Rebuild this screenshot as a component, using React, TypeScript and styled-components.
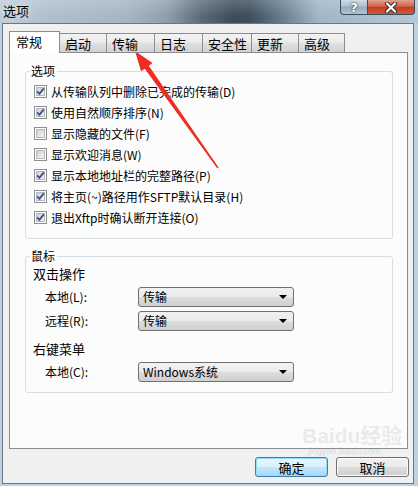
import styled, { createGlobalStyle } from "styled-components";

const TABS = [
  { label: "常规", width: 51 },
  { label: "启动", width: 47 },
  { label: "传输", width: 48 },
  { label: "日志", width: 48 },
  { label: "安全性", width: 49 },
  { label: "更新", width: 47 },
  { label: "高级", width: 46 },
];

const OPTIONS = [
  { label: "从传输队列中删除已完成的传输(D)", checked: true },
  { label: "使用自然顺序排序(N)", checked: true },
  { label: "显示隐藏的文件(F)", checked: false },
  { label: "显示欢迎消息(W)", checked: false },
  { label: "显示本地地址栏的完整路径(P)", checked: true },
  { label: "将主页(~)路径用作SFTP默认目录(H)", checked: true },
  { label: "退出Xftp时确认断开连接(O)", checked: true },
];

function CheckIcon({ checked }: { checked: boolean }) {
  return (
    <svg width="13" height="13" viewBox="0 0 13 13">
      <defs>
        <linearGradient id="cbfill" x1="0" y1="0" x2="1" y2="1">
          <stop offset="0" stopColor="#cbcfd5" />
          <stop offset="1" stopColor="#f7f7f7" />
        </linearGradient>
      </defs>
      <rect x="0.5" y="0.5" width="12" height="12" fill="#fff" stroke="#8e8f8f" />
      <rect x="2.5" y="2.5" width="8" height="8" fill="url(#cbfill)" stroke="#b4b8bd" />
      {checked && (
        <path d="M3.2 6.4 L5.4 8.8 L9.8 3.4" fill="none" stroke="#3d5394" strokeWidth="1.9" />
      )}
    </svg>
  );
}

function CaptionX() {
  return (
    <svg width="14" height="11" viewBox="0 0 14 11">
      <path d="M3 1.5 L11 9.5 M11 1.5 L3 9.5" stroke="#3a2a28" strokeWidth="4.2" strokeLinecap="round" />
      <path d="M3 1.5 L11 9.5 M11 1.5 L3 9.5" stroke="#fff" strokeWidth="2.2" strokeLinecap="round" />
    </svg>
  );
}

export default function App() {
  return (
    <>
      <GlobalStyle />
      <Window>
        <TitleBar>
          <Title>选项</Title>
          <Controls>
            <CaptionButton>?</CaptionButton>
            <CaptionButton $close>
              <CaptionX />
            </CaptionButton>
          </Controls>
        </TitleBar>

        <Body>
          <TabStrip>
            {TABS.map((tab, i) => (
              <Tab key={tab.label} $active={i === 0} $w={tab.width}>
                {tab.label}
              </Tab>
            ))}
          </TabStrip>

          <Panel>
            <Group>
              <GroupTitle>选项</GroupTitle>
              <CheckList>
                {OPTIONS.map((opt) => (
                  <CheckRow key={opt.label}>
                    <CheckIcon checked={opt.checked} />
                    <span>{opt.label}</span>
                  </CheckRow>
                ))}
              </CheckList>
            </Group>

            <Group $spaced>
              <GroupTitle>鼠标</GroupTitle>
              <SubHeading>双击操作</SubHeading>
              <FieldRow>
                <FieldLabel>本地(L):</FieldLabel>
                <Select>
                  传输
                  <Caret />
                </Select>
              </FieldRow>
              <FieldRow $gap>
                <FieldLabel>远程(R):</FieldLabel>
                <Select>
                  传输
                  <Caret />
                </Select>
              </FieldRow>
              <SubHeading $spaced>右键菜单</SubHeading>
              <FieldRow>
                <FieldLabel>本地(C):</FieldLabel>
                <Select>
                  Windows系统
                  <Caret />
                </Select>
              </FieldRow>
            </Group>
          </Panel>

          <ButtonRow>
            <DialogButton $primary>确定</DialogButton>
            <DialogButton>取消</DialogButton>
          </ButtonRow>
        </Body>

        <Watermark>
          Baidu经验
          <small>jingyan.baidu.com</small>
        </Watermark>

        <ArrowOverlay width="418" height="486" viewBox="0 0 418 486">
          <polygon
            points="135,51 152.5,63.1 148.8,65.7 218.6,167.5 217.4,168.5 144.8,68.7 141.1,71.3"
            fill="#ee2d27"
          />
        </ArrowOverlay>
      </Window>
    </>
  );
}

const GlobalStyle = createGlobalStyle`
  html, body {
    margin: 0;
    padding: 0;
  }
  body {
    font-family: "Noto Sans CJK SC", "Noto Sans", sans-serif;
    font-size: 12px;
    color: #000;
  }
`;

const Window = styled.div`
  position: relative;
  width: 418px;
  height: 486px;
  box-sizing: border-box;
  display: flex;
  flex-direction: column;
  padding: 0 4px 2px 2px;
  background: #bcd3e7;
  overflow: hidden;
`;

const TitleBar = styled.div`
  display: flex;
  align-items: flex-start;
  height: 23px;
  margin: 0 -4px 0 -2px;
  padding-left: 3px;
  background: linear-gradient(180deg, rgba(255, 255, 255, 0.18), rgba(255, 255, 255, 0) 70%),
    linear-gradient(
      90deg,
      #bccddb 0%,
      #aebfcd 12%,
      #a4b5c3 30%,
      #8d9eac 40%,
      #5a6b79 48%,
      #3b4c59 56%,
      #3e505e 60%,
      #6c8091 68%,
      #a1b5c6 76%,
      #b3c7d9 100%
    );
`;

const Title = styled.span`
  line-height: 20px;
  padding-top: 1px;
  font-size: 13px;
  text-shadow: 0 0 6px rgba(255, 255, 255, 0.9);
`;

const Controls = styled.div`
  display: flex;
  margin-left: auto;
  margin-right: 3px;
`;

const CaptionButton = styled.div<{ $close?: boolean }>`
  width: ${(p) => (p.$close ? 47 : 28)}px;
  height: 15px;
  box-sizing: border-box;
  display: flex;
  align-items: center;
  justify-content: center;
  border: 1px solid #3d4b58;
  border-top: none;
  border-left: ${(p) => (p.$close ? "none" : "1px solid #3d4b58")};
  border-radius: ${(p) => (p.$close ? "0 0 4px 0" : "0 0 0 4px")};
  background: ${(p) =>
    p.$close
      ? "linear-gradient(180deg, #e3a08e 0%, #d2664d 45%, #c13d24 50%, #cf5a3e 100%)"
      : "linear-gradient(180deg, #d0dce6 0%, #aebfcd 45%, #96a9b9 50%, #b2c5d4 100%)"};
  color: #fff;
  font: bold 13px "DejaVu Sans", sans-serif;
  text-shadow: 0 0 2px #2b3640, 0 0 1px #2b3640;
`;

const Body = styled.div`
  flex: 1;
  display: flex;
  flex-direction: column;
  border: 1px solid #6b7780;
  background: #f0f0f0;
  padding: 7px 5px 6px 6px;
`;

const TabStrip = styled.div`
  position: relative;
  z-index: 1;
  display: flex;
  align-items: flex-end;
  height: 22px;
  margin-bottom: -1px;
`;

const Tab = styled.div<{ $active?: boolean; $w: number }>`
  box-sizing: border-box;
  width: ${(p) => p.$w}px;
  height: ${(p) => (p.$active ? 22 : 20)}px;
  display: flex;
  align-items: center;
  padding: ${(p) => (p.$active ? "0 0 2px 6px" : "0 0 0 5px")};
  border: 1px solid #898c95;
  border-bottom: ${(p) => (p.$active ? "none" : "1px solid #898c95")};
  border-left: ${(p) => (p.$active ? "1px solid #898c95" : "none")};
  background: ${(p) =>
    p.$active ? "#ffffff" : "linear-gradient(180deg, #f3f3f3 0%, #ebebeb 45%, #dedede 55%, #d3d3d3 100%)"};
  font-size: 13px;
  white-space: nowrap;
`;

const Panel = styled.div`
  height: 397px;
  box-sizing: border-box;
  border: 1px solid #898c95;
  background: #fcfcfc;
  padding: 11px 14px 0 15px;
  display: flex;
  flex-direction: column;
`;

const Group = styled.fieldset<{ $spaced?: boolean }>`
  margin: ${(p) => (p.$spaced ? "10px 0 0" : "0")};
  padding: 0 0 10px 7px;
  min-width: 0;
  border: 1px solid #d5dfe5;
  border-radius: 3px;
`;

const GroupTitle = styled.legend`
  margin-left: -3px;
  padding: 0 2px 0 1px;
  line-height: 14px;
  font-size: 12px;
`;

const CheckList = styled.div`
  display: flex;
  flex-direction: column;
  padding-top: 3px;
  padding-left: 1px;
`;

const CheckRow = styled.div`
  display: flex;
  align-items: center;
  gap: 4px;
  height: 21px;
  white-space: nowrap;

  svg {
    flex: none;
  }
`;

const SubHeading = styled.div<{ $spaced?: boolean }>`
  height: 20px;
  line-height: 20px;
  margin-top: ${(p) => (p.$spaced ? 8 : 1)}px;
  font-size: 13px;
`;

const FieldRow = styled.div<{ $gap?: boolean }>`
  display: grid;
  grid-template-columns: 93px 156px;
  align-items: center;
  height: 21px;
  margin-top: ${(p) => (p.$gap ? 3 : 2)}px;
  padding-left: 12px;
`;

const FieldLabel = styled.span`
  font-size: 12px;
`;

const Select = styled.div`
  box-sizing: border-box;
  height: 20px;
  display: flex;
  align-items: center;
  justify-content: space-between;
  padding: 0 6px 0 4px;
  border: 1px solid #707070;
  border-radius: 3px;
  background: linear-gradient(180deg, #f2f2f2 0%, #ebebeb 48%, #dddddd 52%, #cfcfcf 100%);
  font-size: 12px;
`;

const Caret = styled.span`
  width: 0;
  height: 0;
  border-left: 4px solid transparent;
  border-right: 4px solid transparent;
  border-top: 4px solid #000;
`;

const ButtonRow = styled.div`
  display: flex;
  justify-content: flex-end;
  gap: 8px;
  margin-top: 8px;
  margin-right: -1px;
`;

const DialogButton = styled.div<{ $primary?: boolean }>`
  box-sizing: border-box;
  width: 73px;
  height: 20px;
  display: flex;
  align-items: center;
  justify-content: center;
  border: 1px solid ${(p) => (p.$primary ? "#3c7fb1" : "#707070")};
  border-radius: 3px;
  box-shadow: ${(p) => (p.$primary ? "inset 0 0 0 1px #8fdcf8" : "inset 0 0 0 1px #fbfbfb")};
  background: ${(p) =>
    p.$primary
      ? "linear-gradient(180deg, #eaf6fd 0%, #d9f0fc 48%, #bee6fd 52%, #a7d9f5 100%)"
      : "linear-gradient(180deg, #f2f2f2 0%, #ebebeb 48%, #dddddd 52%, #cfcfcf 100%)"};
  font-size: 13px;
`;

const Watermark = styled.div`
  position: absolute;
  left: 302px;
  top: 426px;
  display: flex;
  flex-direction: column;
  font: bold 21px "Liberation Sans", "Noto Sans CJK SC", sans-serif;
  line-height: 20px;
  color: rgba(195, 195, 195, 0.32);
  pointer-events: none;

  small {
    margin-top: 1px;
    padding-left: 6px;
    font-size: 9px;
    font-weight: normal;
    line-height: 9px;
    color: rgba(160, 160, 160, 0.3);
  }
`;

const ArrowOverlay = styled.svg`
  position: absolute;
  left: 0;
  top: 0;
  pointer-events: none;
`;
